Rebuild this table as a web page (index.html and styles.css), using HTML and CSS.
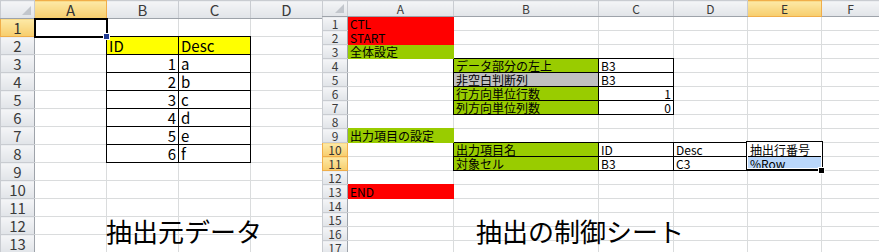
FILE: index.html
```html
<!DOCTYPE html>
<html>
  <head>
    <meta charset="utf-8">
    <title>抽出の制御シート</title>
    <link rel="stylesheet" href="styles.css">
  </head>
  <body>
    <div class="screen">
      <!-- source data sheet -->
      <div class="sheet sheet-data">
        <table class="grid">
          <colgroup>
            <col class="w-rh">
            <col class="w-72">
            <col class="w-72">
            <col class="w-72">
            <col class="w-72">
          </colgroup>
          <thead>
            <tr>
              <th class="corner"><span class="tri"></span></th>
              <th class="hl">A</th>
              <th>B</th>
              <th>C</th>
              <th>D</th>
            </tr>
          </thead>
          <tbody>
            <tr><th class="hl">1</th><td class="active"><span class="handle"></span></td><td></td><td></td><td></td></tr>
            <tr><th>2</th><td></td><td class="yellow b">ID</td><td class="yellow b">Desc</td><td></td></tr>
            <tr><th>3</th><td></td><td class="b num">1</td><td class="b">a</td><td></td></tr>
            <tr><th>4</th><td></td><td class="b num">2</td><td class="b">b</td><td></td></tr>
            <tr><th>5</th><td></td><td class="b num">3</td><td class="b">c</td><td></td></tr>
            <tr><th>6</th><td></td><td class="b num">4</td><td class="b">d</td><td></td></tr>
            <tr><th>7</th><td></td><td class="b num">5</td><td class="b">e</td><td></td></tr>
            <tr><th>8</th><td></td><td class="b num">6</td><td class="b">f</td><td></td></tr>
            <tr><th>9</th><td></td><td></td><td></td><td></td></tr>
            <tr><th>10</th><td></td><td></td><td></td><td></td></tr>
            <tr><th>11</th><td></td><td></td><td></td><td></td></tr>
            <tr><th>12</th><td></td><td></td><td></td><td></td></tr>
            <tr><th>13</th><td></td><td></td><td></td><td></td></tr>
          </tbody>
        </table>
        <div class="caption cap-data">抽出元データ</div>
      </div>

      <!-- control sheet -->
      <div class="sheet sheet-ctl">
        <table class="grid">
          <colgroup>
            <col class="w-rh2">
            <col class="w-a">
            <col class="w-b">
            <col class="w-c">
            <col class="w-d">
            <col class="w-e">
            <col class="w-f">
            <col class="w-g">
          </colgroup>
          <thead>
            <tr>
              <th class="corner"><span class="tri"></span></th>
              <th>A</th>
              <th>B</th>
              <th>C</th>
              <th>D</th>
              <th class="hl">E</th>
              <th>F</th>
              <th></th>
            </tr>
          </thead>
          <tbody>
            <tr><th>1</th><td class="red">CTL</td><td></td><td></td><td></td><td></td><td></td><td></td></tr>
            <tr><th>2</th><td class="red">START</td><td></td><td></td><td></td><td></td><td></td><td></td></tr>
            <tr><th>3</th><td class="green">全体設定</td><td></td><td></td><td></td><td></td><td></td><td></td></tr>
            <tr><th>4</th><td></td><td class="green b">データ部分の左上</td><td class="b">B3</td><td></td><td></td><td></td><td></td></tr>
            <tr><th>5</th><td></td><td class="grey b">非空白判断列</td><td class="b">B3</td><td></td><td></td><td></td><td></td></tr>
            <tr><th>6</th><td></td><td class="green b">行方向単位行数</td><td class="b num">1</td><td></td><td></td><td></td><td></td></tr>
            <tr><th>7</th><td></td><td class="green b">列方向単位列数</td><td class="b num">0</td><td></td><td></td><td></td><td></td></tr>
            <tr><th>8</th><td></td><td></td><td></td><td></td><td></td><td></td><td></td></tr>
            <tr><th>9</th><td class="green">出力項目の設定</td><td></td><td></td><td></td><td></td><td></td><td></td></tr>
            <tr><th class="hl">10</th><td></td><td class="green b">出力項目名</td><td class="b">ID</td><td class="b">Desc</td><td class="b range">抽出行番号<span class="handle"></span></td><td></td><td></td></tr>
            <tr><th class="hl">11</th><td></td><td class="green b">対象セル</td><td class="b">B3</td><td class="b">C3</td><td class="blue b">%Row</td><td></td><td></td></tr>
            <tr><th>12</th><td></td><td></td><td></td><td></td><td></td><td></td><td></td></tr>
            <tr><th>13</th><td class="red">END</td><td></td><td></td><td></td><td></td><td></td><td></td></tr>
            <tr><th>14</th><td></td><td></td><td></td><td></td><td></td><td></td><td></td></tr>
            <tr><th>15</th><td></td><td></td><td></td><td></td><td></td><td></td><td></td></tr>
            <tr><th>16</th><td></td><td></td><td></td><td></td><td></td><td></td><td></td></tr>
            <tr><th>17</th><td></td><td></td><td></td><td></td><td></td><td></td><td></td></tr>
          </tbody>
        </table>
        <div class="caption cap-ctl">抽出の制御シート</div>
      </div>
    </div>
  </body>
</html>
```

FILE: styles.css
```css
body {
  margin: 0;
  background-color: #fff;
  font-family: "Noto Sans CJK JP", sans-serif;
}
.screen {
  display: flex;
  width: 879px;
  height: 252px;
  overflow: hidden;
}
.sheet {
  position: relative;
  overflow: hidden;
  flex: none;
}
.sheet-data {
  width: 322px;
}
.sheet-ctl {
  width: 557px;
}

/* grid */
.grid {
  border-collapse: collapse;
  table-layout: fixed;
  color: #000;
}
.grid col {
  border-right: 1px solid #dadcdd;
}
.grid tr {
  border-bottom: 1px solid #dadcdd;
}
.grid td {
  padding: 0 2px;
  white-space: nowrap;
  overflow: visible;
  vertical-align: bottom;
}
.grid th {
  padding: 0;
  font-weight: normal;
  color: #3b3b3b;
  background: linear-gradient(#f4f5f7, #e1e4e8);
  border: 1px solid #c9ccd1;
  text-align: center;
}
.grid thead th {
  border-bottom-color: #9ea3aa;
}
.grid tbody th {
  border-right-color: #9ea3aa;
}
.grid th.hl {
  background: linear-gradient(#fde9a6, #f7cd6c);
  border-color: #f0ae4a;
  color: #333;
}
.corner {
  position: relative;
}
.tri {
  position: absolute;
  right: 3px;
  bottom: 3px;
  width: 0;
  height: 0;
  border-left: 9px solid transparent;
  border-bottom: 9px solid #c2c6cc;
}

/* source sheet sizes */
.sheet-data .grid {
  width: 322px;
  font-size: 15px;
}
.w-rh { width: 34px; }
.w-72 { width: 72px; }
.sheet-data tr {
  height: 18px;
}
.sheet-data td,
.sheet-data th {
  line-height: 16px;
}

/* control sheet sizes */
.sheet-ctl .grid {
  width: 611px;
  font-size: 12px;
}
.w-rh2 { width: 25px; }
.w-a { width: 106px; }
.w-b { width: 145px; }
.w-c { width: 75px; }
.w-d { width: 74px; }
.w-e { width: 74px; }
.w-f { width: 58px; }
.w-g { width: 54px; }
.sheet-ctl tr {
  height: 14px;
}
.sheet-ctl thead tr {
  height: 16px;
}
.sheet-ctl td,
.sheet-ctl th {
  line-height: 13px;
}

/* cell formats */
.num {
  text-align: right;
}
.yellow {
  background-color: #ffff00;
}
.red {
  background-color: #ff0000;
  border: 1px solid #ff0000;
}
.green {
  background-color: #99cc00;
  border: 1px solid #99cc00;
}
.grey {
  background-color: #c0c0c0;
}
.blue {
  background-color: #bad7fb;
}
.b {
  border: 1px solid #000;
}

/* selection */
.active,
.range {
  position: relative;
}
.active::after {
  content: "";
  position: absolute;
  left: -1px;
  top: -1px;
  right: -2px;
  bottom: -2px;
  border: 2px solid #000;
}
.range::after {
  content: "";
  position: absolute;
  left: -2px;
  top: -2px;
  right: -2px;
  height: 27px;
  border: 1px solid #000;
  box-shadow: inset 0 0 0 1px #fff;
}
.handle {
  position: absolute;
  z-index: 1;
  right: -4px;
  bottom: -4px;
  width: 5px;
  height: 5px;
  background-color: #1f3a93;
  border: 1px solid #fff;
}
.range .handle {
  bottom: -18px;
  background-color: #000;
}

/* captions over the sheets */
.caption {
  position: absolute;
  top: 216px;
  font-size: 26px;
  line-height: 30px;
  color: #000;
  white-space: nowrap;
}
.cap-data {
  left: 106px;
}
.cap-ctl {
  left: 154px;
}
```
